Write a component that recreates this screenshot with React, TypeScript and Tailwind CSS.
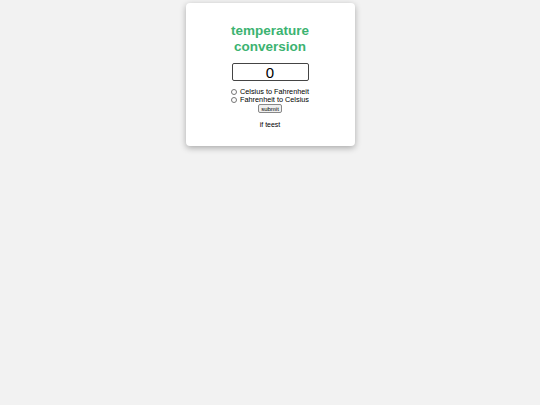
export default function App() {
  return (
    <div className="min-h-[405px] w-full bg-[#f2f2f2] pt-[3px] font-['Liberation_Sans',Arial,sans-serif]">
      <div className="mx-auto flex w-[169px] flex-col items-center rounded-[4px] bg-white pt-[20px] pb-[17px] shadow-[0_2px_6px_rgba(0,0,0,0.3)]">
        <h1 className="text-center text-[13.5px] font-bold leading-[16px] text-[#3cb371]">
          temperature
          <br />
          conversion
        </h1>
        <input
          type="text"
          defaultValue="0"
          className="mt-[8px] h-[18px] w-[77px] rounded-[2px] border border-[#444] text-center text-[15px] leading-[16px] text-black outline-none"
        />
        <div className="mt-[7px] flex flex-col text-[7.3px] leading-[8px] text-black">
          <label className="flex h-[8px] items-center gap-[3px]">
            <input type="radio" name="c" className="m-0 h-[6px] w-[6px]" />
            Celsius to Fahrenheit
          </label>
          <label className="flex h-[8px] items-center gap-[3px]">
            <input type="radio" name="c" className="m-0 h-[6px] w-[6px]" />
            Fahrenheit to Celsius
          </label>
        </div>
        <button className="mt-0 h-[9px] w-[24px] rounded-[2px] border border-[#888] bg-[#efefef] text-[6px] leading-[6px] text-black">
          submit
        </button>
        <p className="mt-[7px] text-[7px] leading-[9px] text-black">if teest</p>
      </div>
    </div>
  );
}
